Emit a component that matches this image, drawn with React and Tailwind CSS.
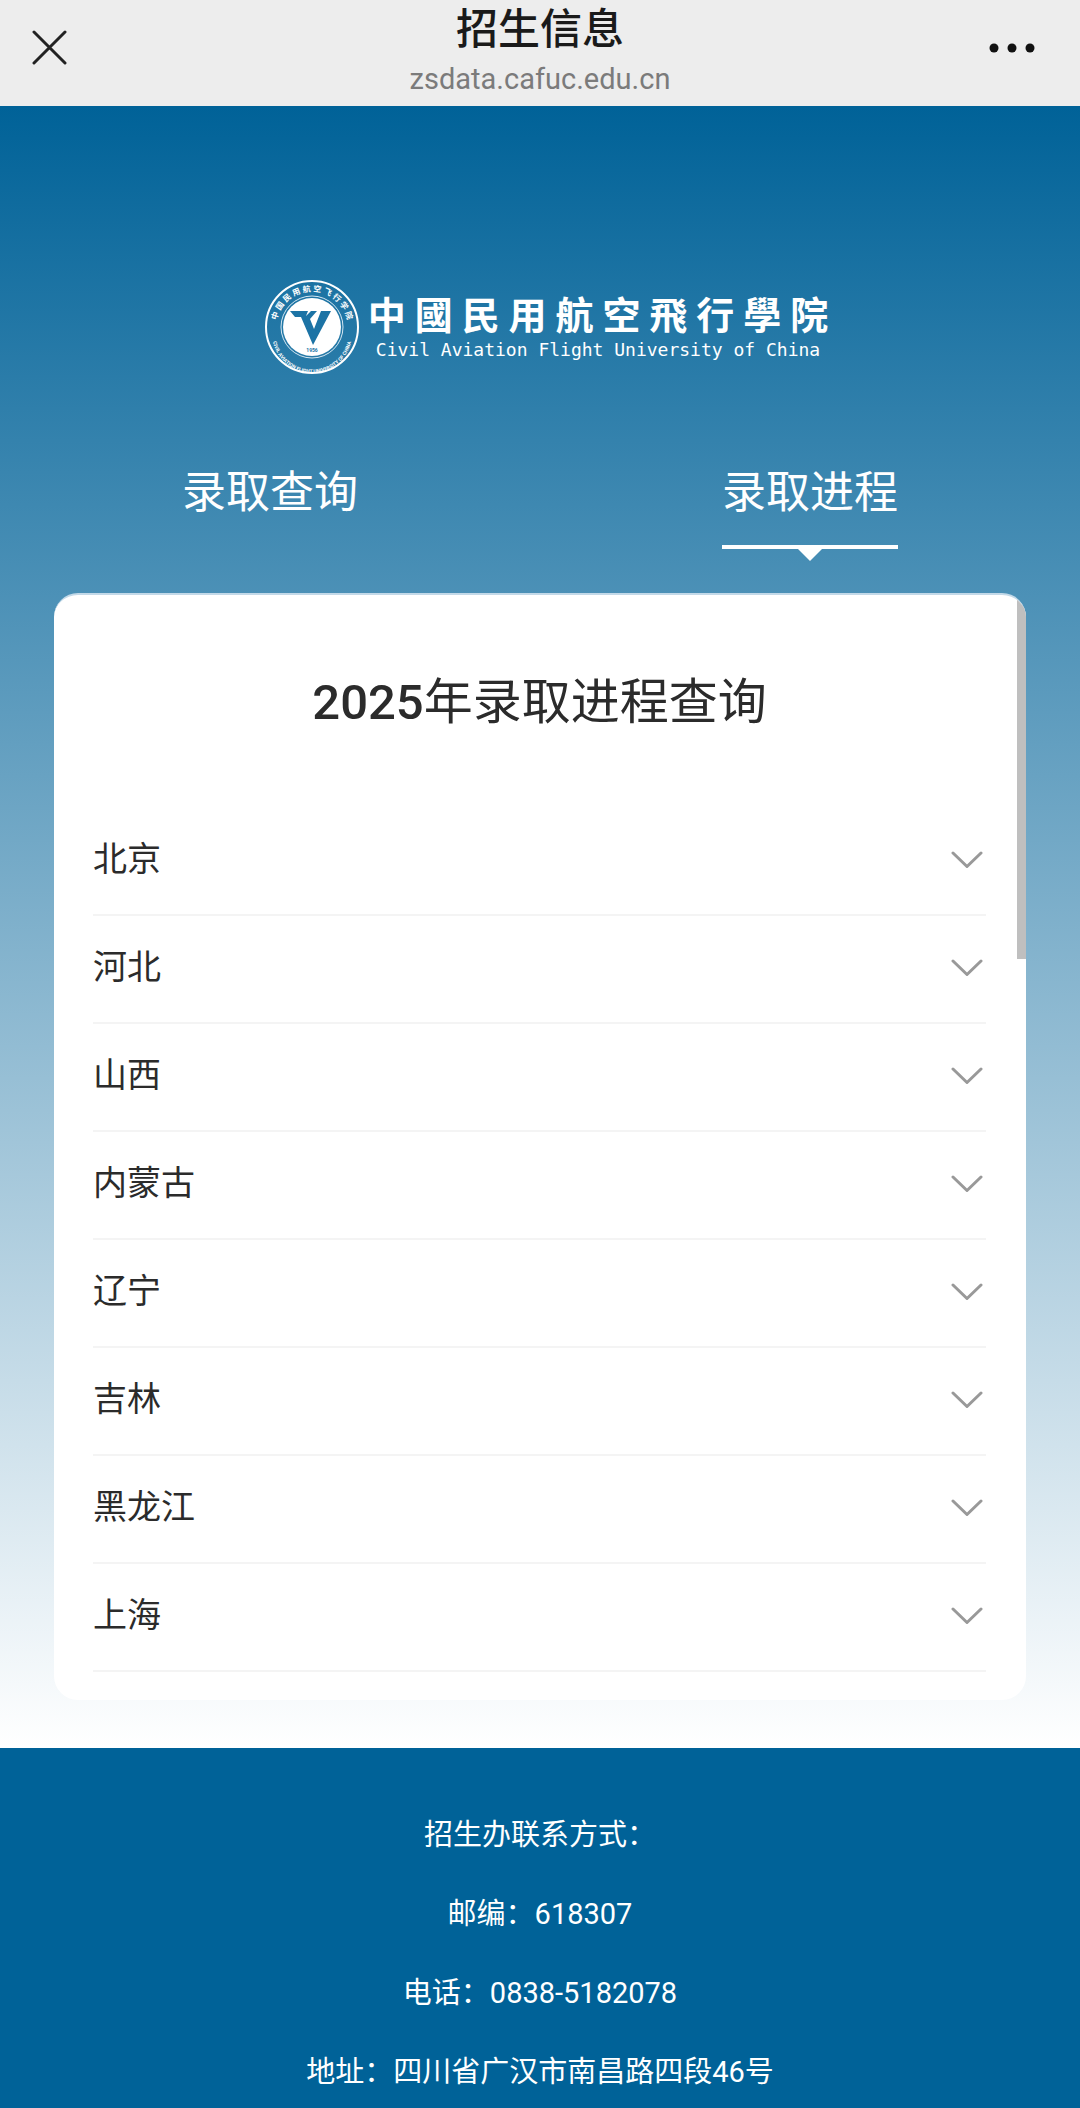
import { useState } from "react";

const TABS = ["录取查询", "录取进程"];

const PROVINCES = ["北京", "河北", "山西", "内蒙古", "辽宁", "吉林", "黑龙江", "上海"];

const CONTACT = [
  "招生办联系方式：",
  "邮编：618307",
  "电话：0838-5182078",
  "地址：四川省广汉市南昌路四段46号",
];

function TopBar() {
  return (
    <header className="flex h-[106px] justify-between bg-[#ededed] px-8">
      <button type="button" aria-label="关闭" className="flex h-24 w-15 items-center">
        <svg width="36" height="36" viewBox="0 0 36 36" stroke="#222" strokeWidth="3" strokeLinecap="round" fill="none">
          <path d="M2 2 33 33M33 2 2 33" />
        </svg>
      </button>
      <div className="text-center">
        <h1 className="pt-1 text-[42px] leading-[52px] font-medium text-[#1a1a1a]">招生信息</h1>
        <p className="text-[29px] leading-[46px] text-[#7b7b7b]">zsdata.cafuc.edu.cn</p>
      </div>
      <button type="button" aria-label="更多" className="flex h-24 w-15 items-center">
        <svg width="48" height="12" viewBox="0 0 48 12" fill="#111">
          <circle cx="6" cy="6" r="4.5" />
          <circle cx="24" cy="6" r="4.5" />
          <circle cx="42" cy="6" r="4.5" />
        </svg>
      </button>
    </header>
  );
}

function Emblem() {
  return (
    <svg width="96" height="96" viewBox="-48 -48 96 96" fill="none" className="shrink-0">
      <defs>
        <path id="ring-top" d="M-35 9A36 36 0 1 1 35 9" />
        <path id="ring-bottom" d="M-40 6A40 40 0 0 0 40 6" />
      </defs>
      <circle r="46" stroke="#fff" strokeWidth="2" />
      <circle r="31" stroke="#d5e7f2" strokeWidth="1" />
      <circle r="29" fill="#fff" />
      <path d="M-22-16-17-10H-11L1 18 19-16H9L2 2-2-8 5-16H-1L-6-11-4-16Z" fill="#1c73a5" />
      <text fill="#fff" fontSize="8" fontWeight="700">
        <textPath href="#ring-top" startOffset="50%" textAnchor="middle">中 国 民 用 航 空 飞 行 学 院</textPath>
      </text>
      <text fill="#fff" fontSize="5" fontWeight="700">
        <textPath href="#ring-bottom" startOffset="50%" textAnchor="middle">CIVIL AVIATION FLIGHT UNIVERSITY OF CHINA</textPath>
      </text>
      <text y="25" fill="#1c73a5" fontSize="5" fontWeight="700" textAnchor="middle">1956</text>
    </svg>
  );
}

function Logo() {
  return (
    <div className="flex items-center justify-center gap-2 pl-3 text-white">
      <Emblem />
      <div>
        <div className="flex justify-between pt-1 text-[38px] leading-[42px] font-bold">
          {[..."中國民用航空飛行學院"].map((char) => (
            <span key={char}>{char}</span>
          ))}
        </div>
        <p className="px-2 font-['DejaVu_Sans_Mono',monospace] text-[18px] leading-[26px]">
          Civil Aviation Flight University of China
        </p>
      </div>
    </div>
  );
}

function Province({ name }) {
  return (
    <li className="border-b-2 border-[#f4f4f4]">
      <button type="button" className="flex h-[106px] w-full items-center justify-between text-left">
        <span className="pb-1 text-[34px] leading-[48px]">{name}</span>
        <svg width="38" height="20" viewBox="0 0 38 20" fill="none" stroke="#999" strokeWidth="3" strokeLinecap="round" strokeLinejoin="round">
          <path d="M5 2 19 15.500 33 2" />
        </svg>
      </button>
    </li>
  );
}

export default function App() {
  const [active, setActive] = useState(1);

  return (
    <div className="flex min-h-screen flex-col font-['Roboto','Noto_Sans_CJK_SC',sans-serif]">
      <TopBar />

      <main className="bg-linear-to-b/srgb from-[#006298] to-white pt-[173px] pb-12">
        <Logo />

        <nav className="mt-[86px] grid grid-cols-2 justify-items-center">
          {TABS.map((tab, i) => (
            <button key={tab} type="button" onClick={() => setActive(i)} className="flex flex-col items-center text-white">
              <span className="text-[44px] leading-[64px]">{tab}</span>
              {active === i && (
                <>
                  <span className="mt-5 h-1 w-full bg-white" />
                  <span className="border-x-12 border-t-12 border-x-transparent border-t-white" />
                </>
              )}
            </button>
          ))}
        </nav>

        <section className="relative mx-[54px] mt-8 overflow-hidden rounded-3xl border-t-2 border-[#c3d9e8] bg-white pr-10 pb-7 pl-[39px] text-[#2b2b2b]">
          <h2 className="pt-[72px] text-center text-[49px] leading-[72px] font-medium">
            2025<span className="font-normal">年录取进程查询</span>
          </h2>
          <ul className="mt-[69px]">
            {PROVINCES.map((name) => (
              <Province key={name} name={name} />
            ))}
          </ul>
          {/* barra de desplazamiento */}
          <div className="absolute top-0 right-0 h-[364px] w-[9px] bg-[#bfbfbf]" />
        </section>
      </main>

      <footer className="flex-1 bg-[#006298] pt-12 text-center text-[29px] leading-[79px] text-white">
        {CONTACT.map((line) => (
          <p key={line}>{line}</p>
        ))}
      </footer>
    </div>
  );
}
